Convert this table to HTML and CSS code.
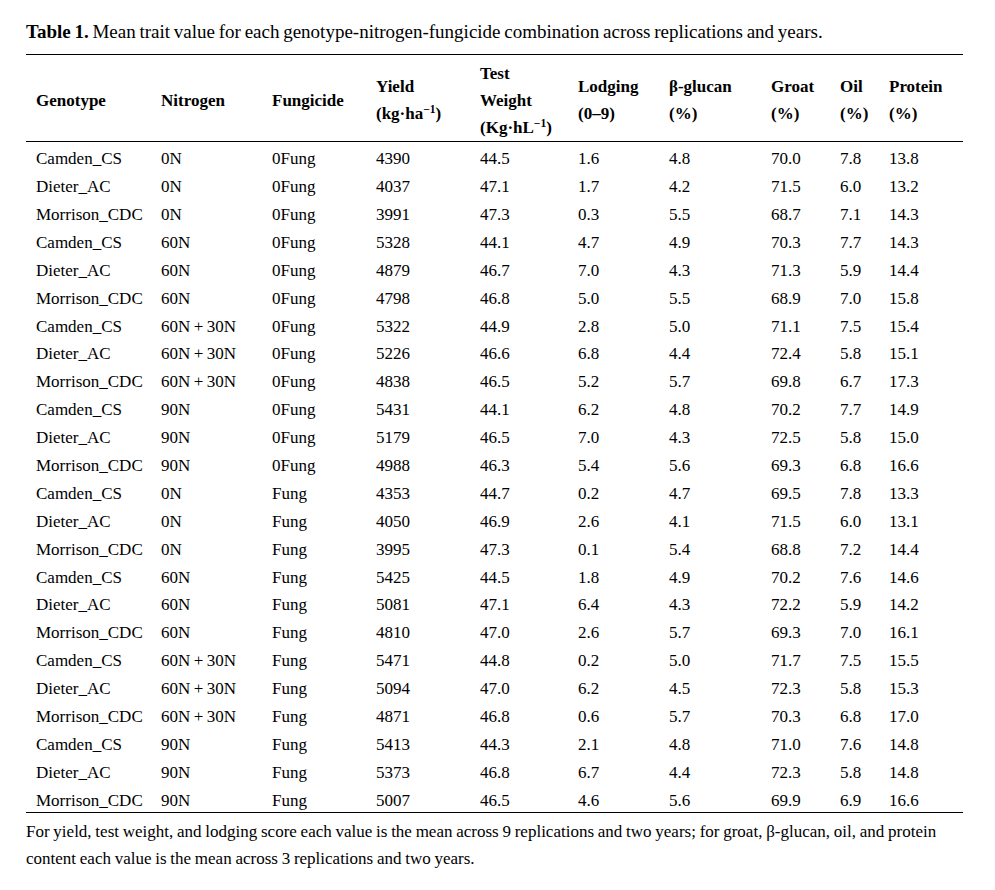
FILE: index.html
```html
<!DOCTYPE html>
<html lang="en">
<head>
<meta charset="utf-8">
<title>Table 1</title>
<link rel="stylesheet" href="styles.css">
</head>
<body>
<div class="page">
  <p class="caption"><b>Table 1.</b> Mean trait value for each genotype-nitrogen-fungicide combination across replications and years.</p>
  <table class="data">
    <colgroup>
      <col class="c1"><col class="c2"><col class="c3"><col class="c4"><col class="c5">
      <col class="c6"><col class="c7"><col class="c8"><col class="c9"><col class="c10">
    </colgroup>
    <thead>
      <tr>
        <th>Genotype</th>
        <th>Nitrogen</th>
        <th>Fungicide</th>
        <th>Yield<br>(kg·ha<sup>−1</sup>)</th>
        <th>Test<br>Weight<br>(Kg·hL<sup>−1</sup>)</th>
        <th>Lodging<br>(0‒9)</th>
        <th>β-glucan<br>(%)</th>
        <th>Groat<br>(%)</th>
        <th>Oil<br>(%)</th>
        <th>Protein<br>(%)</th>
      </tr>
    </thead>
    <tbody>
      <tr><td>Camden_CS</td><td>0N</td><td>0Fung</td><td>4390</td><td>44.5</td><td>1.6</td><td>4.8</td><td>70.0</td><td>7.8</td><td>13.8</td></tr>
      <tr><td>Dieter_AC</td><td>0N</td><td>0Fung</td><td>4037</td><td>47.1</td><td>1.7</td><td>4.2</td><td>71.5</td><td>6.0</td><td>13.2</td></tr>
      <tr><td>Morrison_CDC</td><td>0N</td><td>0Fung</td><td>3991</td><td>47.3</td><td>0.3</td><td>5.5</td><td>68.7</td><td>7.1</td><td>14.3</td></tr>
      <tr><td>Camden_CS</td><td>60N</td><td>0Fung</td><td>5328</td><td>44.1</td><td>4.7</td><td>4.9</td><td>70.3</td><td>7.7</td><td>14.3</td></tr>
      <tr><td>Dieter_AC</td><td>60N</td><td>0Fung</td><td>4879</td><td>46.7</td><td>7.0</td><td>4.3</td><td>71.3</td><td>5.9</td><td>14.4</td></tr>
      <tr><td>Morrison_CDC</td><td>60N</td><td>0Fung</td><td>4798</td><td>46.8</td><td>5.0</td><td>5.5</td><td>68.9</td><td>7.0</td><td>15.8</td></tr>
      <tr><td>Camden_CS</td><td>60N&#8201;+&#8201;30N</td><td>0Fung</td><td>5322</td><td>44.9</td><td>2.8</td><td>5.0</td><td>71.1</td><td>7.5</td><td>15.4</td></tr>
      <tr><td>Dieter_AC</td><td>60N&#8201;+&#8201;30N</td><td>0Fung</td><td>5226</td><td>46.6</td><td>6.8</td><td>4.4</td><td>72.4</td><td>5.8</td><td>15.1</td></tr>
      <tr><td>Morrison_CDC</td><td>60N&#8201;+&#8201;30N</td><td>0Fung</td><td>4838</td><td>46.5</td><td>5.2</td><td>5.7</td><td>69.8</td><td>6.7</td><td>17.3</td></tr>
      <tr><td>Camden_CS</td><td>90N</td><td>0Fung</td><td>5431</td><td>44.1</td><td>6.2</td><td>4.8</td><td>70.2</td><td>7.7</td><td>14.9</td></tr>
      <tr><td>Dieter_AC</td><td>90N</td><td>0Fung</td><td>5179</td><td>46.5</td><td>7.0</td><td>4.3</td><td>72.5</td><td>5.8</td><td>15.0</td></tr>
      <tr><td>Morrison_CDC</td><td>90N</td><td>0Fung</td><td>4988</td><td>46.3</td><td>5.4</td><td>5.6</td><td>69.3</td><td>6.8</td><td>16.6</td></tr>
      <tr><td>Camden_CS</td><td>0N</td><td>Fung</td><td>4353</td><td>44.7</td><td>0.2</td><td>4.7</td><td>69.5</td><td>7.8</td><td>13.3</td></tr>
      <tr><td>Dieter_AC</td><td>0N</td><td>Fung</td><td>4050</td><td>46.9</td><td>2.6</td><td>4.1</td><td>71.5</td><td>6.0</td><td>13.1</td></tr>
      <tr><td>Morrison_CDC</td><td>0N</td><td>Fung</td><td>3995</td><td>47.3</td><td>0.1</td><td>5.4</td><td>68.8</td><td>7.2</td><td>14.4</td></tr>
      <tr><td>Camden_CS</td><td>60N</td><td>Fung</td><td>5425</td><td>44.5</td><td>1.8</td><td>4.9</td><td>70.2</td><td>7.6</td><td>14.6</td></tr>
      <tr><td>Dieter_AC</td><td>60N</td><td>Fung</td><td>5081</td><td>47.1</td><td>6.4</td><td>4.3</td><td>72.2</td><td>5.9</td><td>14.2</td></tr>
      <tr><td>Morrison_CDC</td><td>60N</td><td>Fung</td><td>4810</td><td>47.0</td><td>2.6</td><td>5.7</td><td>69.3</td><td>7.0</td><td>16.1</td></tr>
      <tr><td>Camden_CS</td><td>60N&#8201;+&#8201;30N</td><td>Fung</td><td>5471</td><td>44.8</td><td>0.2</td><td>5.0</td><td>71.7</td><td>7.5</td><td>15.5</td></tr>
      <tr><td>Dieter_AC</td><td>60N&#8201;+&#8201;30N</td><td>Fung</td><td>5094</td><td>47.0</td><td>6.2</td><td>4.5</td><td>72.3</td><td>5.8</td><td>15.3</td></tr>
      <tr><td>Morrison_CDC</td><td>60N&#8201;+&#8201;30N</td><td>Fung</td><td>4871</td><td>46.8</td><td>0.6</td><td>5.7</td><td>70.3</td><td>6.8</td><td>17.0</td></tr>
      <tr><td>Camden_CS</td><td>90N</td><td>Fung</td><td>5413</td><td>44.3</td><td>2.1</td><td>4.8</td><td>71.0</td><td>7.6</td><td>14.8</td></tr>
      <tr><td>Dieter_AC</td><td>90N</td><td>Fung</td><td>5373</td><td>46.8</td><td>6.7</td><td>4.4</td><td>72.3</td><td>5.8</td><td>14.8</td></tr>
      <tr><td>Morrison_CDC</td><td>90N</td><td>Fung</td><td>5007</td><td>46.5</td><td>4.6</td><td>5.6</td><td>69.9</td><td>6.9</td><td>16.6</td></tr>
    </tbody>
  </table>
  <p class="note">For yield, test weight, and lodging score each value is the mean across 9 replications and two years; for groat, β-glucan, oil, and protein content each value is the mean across 3 replications and two years.</p>
</div>
</body>
</html>
```

FILE: styles.css
```css
html, body {
  margin: 0;
  padding: 0;
  background: #ffffff;
}

body {
  font-family: "Liberation Serif", "Times New Roman", serif;
  color: #000000;
}

.page {
  width: 937px;
  padding: 20px 32px 0 26px;
}

.caption {
  margin: 0 0 10px 0;
  font-size: 19px;
  line-height: 24px;
  word-spacing: -1px;
  white-space: nowrap;
}

.caption b {
  font-weight: bold;
}

.data {
  width: 937px;
  table-layout: fixed;
  border-collapse: collapse;
  border-top: 1px solid #000;
  border-bottom: 1px solid #000;
  font-size: 17px;
}

.c1 { width: 125px; }
.c2 { width: 111px; }
.c3 { width: 104px; }
.c4 { width: 104px; }
.c5 { width: 98px; }
.c6 { width: 91px; }
.c7 { width: 102px; }
.c8 { width: 69px; }
.c9 { width: 49px; }
.c10 { width: 84px; }

.data thead tr {
  border-bottom: 1px solid #000;
}

.data th {
  text-align: left;
  vertical-align: middle;
  font-weight: bold;
  padding: 4.7px 0 0 10px;
  line-height: 27.2px;
  white-space: nowrap;
}

.data sup {
  font-size: 0.68em;
  line-height: 0;
  vertical-align: 0.55em;
}

.data td {
  padding: 4.9px 0 0 10px;
  line-height: 23px;
  white-space: nowrap;
}

.note {
  margin: 5px 0 0 0;
  font-size: 17px;
  line-height: 27.5px;
  word-spacing: -0.5px;
}
```
